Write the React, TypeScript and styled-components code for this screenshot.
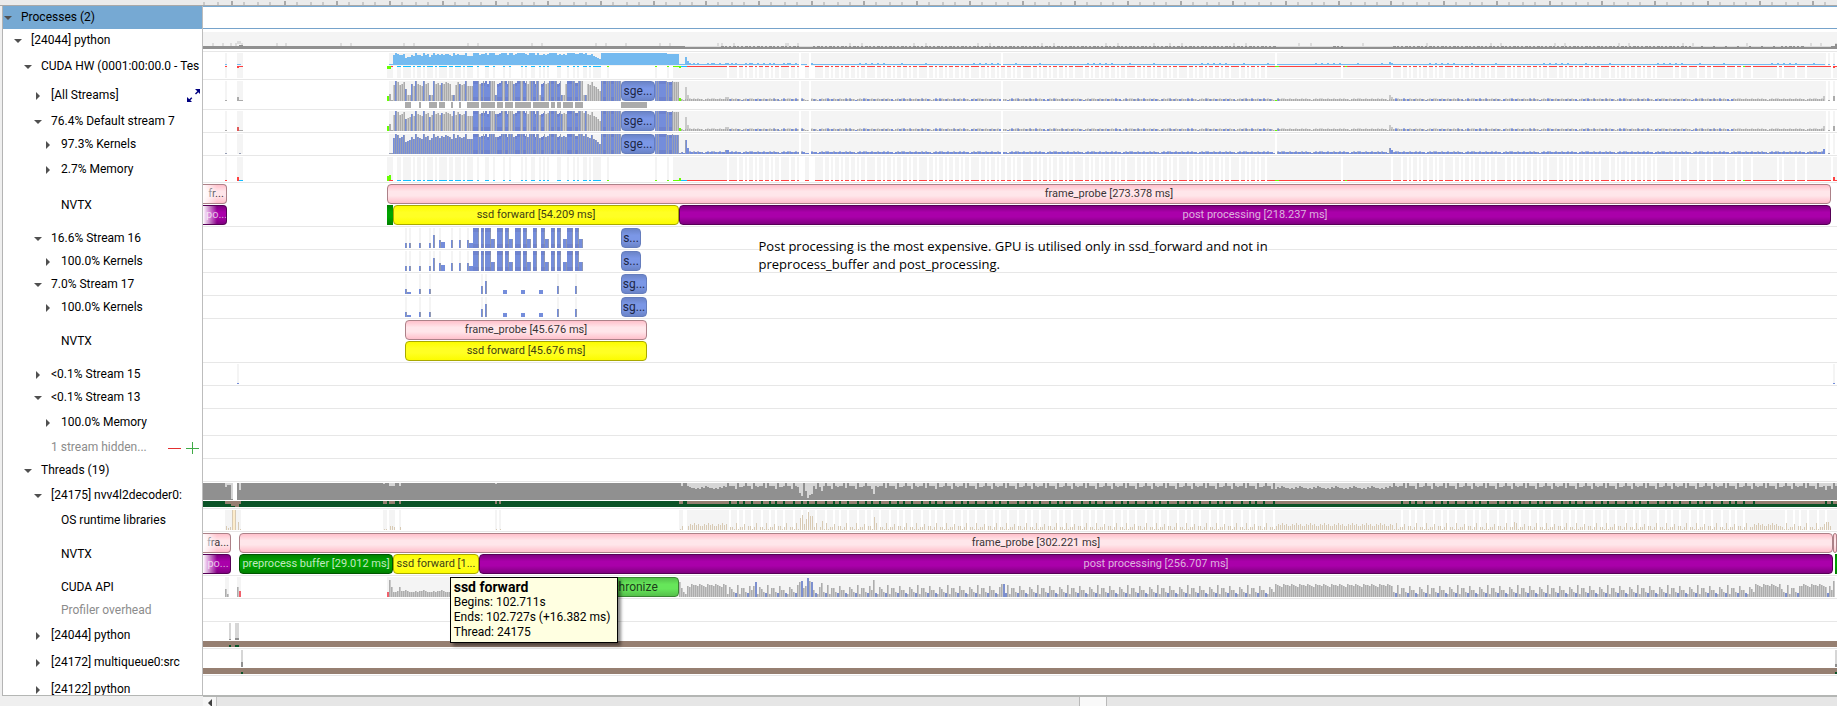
import React from 'react';
import styled, { createGlobalStyle, css } from 'styled-components';

const GlobalStyle = createGlobalStyle`
  *, *::before, *::after { box-sizing: border-box; }
  body { margin: 0; background: #efefef; font-family: Roboto, "Liberation Sans", sans-serif; font-size: 12px; color: #000; }
  button { font: inherit; color: inherit; padding: 0; border: 0; background: none; }
`;

/* ---------- page frame ---------- */

const Page = styled.div`
  height: 100vh;
  display: flex;
  flex-direction: column;
  overflow: hidden;
`;

const RulerBar = styled.header`
  display: flex;
  flex: none;
  height: 6px;
  padding-left: 203px;
  background: #ebebeb;
  border-bottom: 1px solid #a9a9a9;
`;

const Rows = styled.main`
  flex: 1;
  min-height: 0;
  overflow: hidden;
  margin-left: 2px;
  border-left: 1px solid #b4b4b4;
  border-bottom: 1px solid #b4b6b4;
  background: #fff;
`;

const Row = styled.div<{ $h: number }>`
  display: flex;
  height: ${p => p.$h}px;
`;

const Label = styled.div<{ $depth: number; $head?: boolean; $dim?: boolean; $even?: boolean }>`
  display: flex;
  align-items: center;
  flex: none;
  width: 200px;
  padding: 0 0 ${p => (p.$even ? 0 : 2)}px ${p => p.$depth * 10}px;
  border-right: 1px solid #bdbdbd;
  overflow: hidden;
  white-space: nowrap;
  line-height: 16px;
  background: ${p => (p.$head ? '#76a9d3' : '#fff')};
  color: ${p => (p.$dim ? '#8c8c8c' : '#000')};
`;

const Toggle = styled.button`
  display: flex;
  flex: none;
  align-items: center;
  justify-content: center;
  width: 10px;
  height: 16px;
  margin-right: 8px;
`;

const NoToggle = styled.span`
  flex: none;
  width: 18px;
`;

const Tools = styled.span`
  display: flex;
  gap: 4px;
  margin-left: auto;
  padding-right: 2px;
`;

const ToolButton = styled.button`
  display: flex;
  align-items: center;
`;

const Lane = styled.div<{ $head?: boolean }>`
  position: relative;
  flex: 1;
  min-width: 0;
  border-bottom: 1px solid #e7e7e7;
  ${p => p.$head && css`
    border-top: 1px solid #76a9d3;
    border-bottom-color: #76a3cb;
  `}
`;

const Svg = styled.svg`
  display: block;
  width: 100%;
`;

const Over = styled.div`
  position: absolute;
  inset: 0;
  display: flex;
  flex-direction: column;
  gap: 1px;
  padding-top: 1px;
`;

const Track = styled.div<{ $parts: number[] }>`
  display: grid;
  grid-template-columns: ${p => p.$parts.map(n => `minmax(0, ${n}fr)`).join(' ')};
  height: 20px;
`;

const Space = styled.span<{ $w?: number }>`
  flex: ${p => p.$w ?? 1} 1 0;
`;

type Tone = 'pink' | 'yellow' | 'purple' | 'green' | 'lime' | 'blue';
const tones: Record<Tone, [string, string, string, string]> = {
  pink: ['#ffc0cb', '#ffe6ea', '#ac8188', '#3b3336'],
  yellow: ['#fcfc00', '#ffff24', '#a9a900', '#3e3e10'],
  purple: ['#800080', '#aa00aa', '#560056', '#dcb4dc'],
  green: ['#008000', '#00a400', '#005600', '#c2e6c2'],
  lime: ['#55c04b', '#66e65a', '#3a8433', '#1d3d1a'],
  blue: ['#6b84c8', '#7b97e6', '#657dbd', '#1d2644'],
};

const Range = styled.div<{ $tone: Tone; $fade?: boolean; $slim?: boolean }>`
  position: relative;
  overflow: hidden;
  white-space: nowrap;
  text-align: center;
  font-size: ${p => (p.$tone === 'blue' || p.$tone === 'lime' ? 12 : 11)}px;
  line-height: 18px;
  border: 1px solid ${p => tones[p.$tone][2]};
  border-radius: 4px;
  color: ${p => tones[p.$tone][3]};
  background: linear-gradient(${p => `${tones[p.$tone][0]}, ${tones[p.$tone][1]} 35%, ${tones[p.$tone][1]} 60%, ${tones[p.$tone][0]}`});
  ${p => p.$slim && css`border-width: 0; border-radius: 0;`}
  ${p => p.$fade && css`
    border-left: 0;
    border-radius: 0 4px 4px 0;
    padding-left: 3px;
    &::before {
      content: '';
      position: absolute;
      inset: -1px auto -1px 0;
      width: 14px;
      background: linear-gradient(90deg, #fff, rgba(255, 255, 255, 0));
    }
  `}
`;

const Note = styled.p`
  position: absolute;
  z-index: 2;
  top: 10px;
  left: 34%;
  margin: 0;
  white-space: nowrap;
  font-family: "Open Sans", "Noto Sans", sans-serif;
  font-size: 13px;
  line-height: 18px;
`;

const Tip = styled.div`
  position: absolute;
  z-index: 3;
  top: 1px;
  left: 15.1%;
  min-width: 168px;
  padding: 2px 3px;
  border: 1px solid #000;
  background: #ffffe1;
  box-shadow: 3px 3px 3px rgba(0, 0, 0, 0.45);
  line-height: 15px;
  white-space: nowrap;
`;

const TipTitle = styled.div`
  font-size: 14px;
  font-weight: 700;
`;

const TipLine = styled.div``;

const ScrollBar = styled.footer`
  display: flex;
  flex: none;
  height: 10px;
  margin-left: 203px;
  border-top: 1px solid #b4b6b4;
  background: #e6e6e6;
`;

const ScrollButton = styled.button`
  display: flex;
  align-items: flex-start;
  justify-content: center;
  width: 14px;
  padding-top: 2px;
  background: #f6f6f6;
  border-right: 1px solid #c4c4c4;
`;

const Thumb = styled.button`
  flex: 26 1 0;
  background: #f9f9f9;
  border: solid #b9b9b9;
  border-width: 0 1px;
`;

/* ---------- chart drawing ---------- */

const START = 203;
const SPAN = 1634;
const BG = '#f4f4f4';
const BLUE = '#748ddb';
const SEP = '#979fb6';
const GREY = '#c9c9c9';
const GREY2 = '#ababab';
const SKY = '#74baf0';
const RED = '#ff4040';
const LIME = '#66ff00';
const CYAN = '#12bdff';

type Layer = [string, string];
const r = (x: number, y: number, w: number, h: number) => `M${x} ${y}h${w}v${h}h${-w}z`;
const rs = (list: number[][], y: number, h: number) => list.map(([a, b]) => r(a, y, b - a, h)).join('');

function Chart({ h, layers }: { h: number; layers: Layer[] }) {
  return (
    <Svg height={h} viewBox={`${START} 0 ${SPAN} ${h}`} preserveAspectRatio="none" shapeRendering="crispEdges" aria-hidden="true">
      {layers.map(([fill, d], i) => <path key={i} fill={fill} d={d} />)}
    </Svg>
  );
}

/* utilisation samples, two units apart, from 393 up to 679 */
const load = [
  16, 20, 19, 16, 17, 19, 12, 13, 14, 17, 15, 20, 17, 16, 15, 20, 17, 18, 14, 16, 20, 17, 18, 16, 18, 17, 19, 18, 17, 15,
  20, 16, 19, 17, 16, 17, 20, 15, 15, 15, 20, 20, 20, 17, 18, 18, 20, 17, 20, 20, 20, 17, 17, 18, 20, 20, 20, 17, 20, 20,
  17, 18, 20, 20, 20, 20, 18, 17, 20, 20, 20, 17, 20, 16, 17, 18, 17, 18, 20, 20, 20, 20, 17, 18, 17, 18, 17, 20, 20, 20,
  20, 18, 18, 20, 20, 18, 20, 17, 16, 19, 15, 14, 12, 10,
];
while (load.length < 137) load.push(20);
load.push(19, 19, 19, 19, 19, 19);

/* long kernels that are drawn as one block */
const solid = [
  [473, 479], [481, 484], [485, 491], [497, 503], [505, 509], [515, 521], [523, 527], [533, 537], [541, 545], [551, 555],
  [557, 561], [567, 573], [575, 579], [603, 607], [611, 615], [659, 667], [669, 673],
];
const steps = [
  [491, 495, 9], [509, 513, 9], [527, 531, 9], [545, 549, 9], [563, 567, 9], [579, 583, 9],
];
const inSolid = (x: number) => solid.some(([a, b]) => x >= a && x < b);

const topGaps = [[799, 801], [809, 811], [1001, 1003], [1275, 1277]];
const laneBg = (y: number, h: number, wide = false) => {
  let d = r(389, y, 288, h) + r(225, y, 2, h) + r(237, y, 6, h);
  let from = 677;
  topGaps.filter(g => !wide || g[0] !== 1275).forEach(([a, b]) => { d += r(from, y, a - from, h); from = b; });
  return d + r(from, y, 1826 - from, h) + r(1828, y, 2, h) + r(1833, y, 2, h);
};

const tailShape = [2, 3, 2, 2, 3, 2, 3, 2, 2, 1, 2, 3, 2, 3, 3, 2, 2, 3, 2];
const tailHeight = (x: number) => {
  if (x < 685) return x % 4 === 1 ? 2 : 1;
  if (x === 685) return 14;
  if (x === 687) return 6;
  if (x === 689) return 3;
  if (x === 725 || x === 727) return 4;
  if (x === 1389) return 6;
  if (x === 1391) return 4;
  if (x === 1823) return 5;
  if (x > 801 && x < 809) return x < 805 ? 2 : 1;
  return tailShape[((x - 685) / 2) % tailShape.length];
};

const kernels = (bottom: number, mode: 'blue' | 'mixed', cut = false): Layer[] => {
  let blue = '', sep = '', grey = '', grey2 = '', pale = '', shade = '';
  load.forEach((v, i) => {
    const x = 393 + i * 2;
    if (x >= 621 && x < 655) return;
    let h = v;
    const block = inSolid(x);
    const dense = x >= 601;
    const isBlue = mode === 'blue' || block || (x < 473 && [1, 6, 9, 11, 15, 18, 20, 24, 30, 33, 36].includes(i)) || (dense && x < 673) || (x > 473 && x < 590 && i % 3 === 0);
    if (cut && !block && x > 400 && x < 590 && (i % 11 === 7 || i % 11 === 8)) h = 6;
    if (isBlue) {
      blue += r(x, bottom - h, 2, h);
      if (!block) sep += r(x + 1, bottom - h, 1, h);
      else shade += r(x, bottom - h, 2, 3) + r(x, bottom - 4, 2, 4);
    } else {
      grey += r(x, bottom - h, 2, h);
      grey2 += r(x + 1, bottom - h, 1, h);
    }
  });
  solid.forEach(([, b]) => { sep += r(b - 1, bottom - 20, 1, 20); });
  for (let x = 679; x < 1825; x += 2) {
    if (topGaps.some(([a]) => x === a)) continue;
    const h = tailHeight(x);
    const k = (x - 679) / 2;
    const quiet = (x < 725) || (x > 1277 && x < 1391) || x > 1735;
    const b = mode === 'blue' || (!quiet && [2, 4, 7].includes(k % 9));
    if (b) { blue += r(x, bottom - h, 2, h); if (k % 2) sep += r(x, bottom - h, 1, h); }
    else { grey += r(x, bottom - h, 2, h); grey2 += r(x, bottom - Math.min(h, 2), 1, Math.min(h, 2)); }
    if (h === 3) pale += r(x, bottom - 3, 2, 1);
  }
  const small = r(389, bottom - 1, 4, 1) + r(225, bottom - 1, 2, 1) + r(239, bottom - 1, 2, 1) + r(1828, bottom - 1, 2, 1);
  const out: Layer[] = [[BLUE, blue], ['rgba(90,105,170,.25)', shade], [SEP, sep], [GREY, grey], [GREY2, grey2], ['rgba(244,244,244,.4)', pale], [mode === 'blue' ? SEP : GREY2, small]];
  if (mode === 'mixed') {
    out.push([LIME, r(387, bottom - 5, 2, 5) + r(679, bottom - 3, 2, 3) + r(1275, bottom - 1, 2, 1)]);
    out.push([GREY2, r(389, bottom - 7, 2, 7) + r(239, bottom - 1, 4, 1) + r(1833, bottom - 5, 2, 5)]);
    out.push([cut ? GREY2 : '#e05a5a', r(237, bottom - 4, 2, 4)]);
  }
  return out;
};

/* memory transfer bursts */
const bursts: number[][] = [
  [387, 393], [397, 401], [403, 411], [413, 415], [417, 421], [423, 425], [427, 433], [435, 437], [439, 447], [449, 453], [455, 461], [463, 465], [467, 473],
  [477, 479], [485, 489], [493, 495], [503, 505], [509, 511], [521, 523], [525, 527], [531, 535], [539, 541], [543, 545], [547, 549], [557, 561], [567, 569],
  [573, 575], [577, 579], [583, 587], [589, 591], [593, 601], [607, 609], [655, 657], [667, 669],
];
const tailBursts: number[][] = [[673, 727]];
{
  const cycle = [[2, 8], [2, 4], [2, 2], [2, 4], [2, 2], [2, 4], [2, 4], [2, 2], [2, 4]];
  const fill = (from: number, to: number) => {
    let x = from, i = 0;
    while (x < to) {
      const [g, w] = cycle[i++ % cycle.length];
      x += g;
      if (x < to) tailBursts.push([x, Math.min(to, x + w)]);
      x += w;
    }
  };
  fill(727, 799);
  tailBursts.push([805, 809]);
  fill(813, 1269);
  tailBursts.push([1269, 1341], [1343, 1391]);
  fill(1391, 1655);
  tailBursts.push([1657, 1673], [1675, 1679], [1681, 1687], [1689, 1697], [1699, 1705], [1707, 1711], [1713, 1725], [1727, 1735], [1737, 1741], [1743, 1751], [1753, 1777], [1779, 1782], [1784, 1795], [1797, 1805], [1807, 1831], [1833, 1837]);
}

const hwChart: Layer[] = (() => {
  let sky = '';
  load.forEach((v, i) => { const h = Math.round(v * 0.6); sky += r(393 + 2 * i, 13 - h, 2, h); });
  for (let x = 679; x < 1825; x += 2) {
    if (topGaps.some(([a]) => x === a) || x === 807) continue;
    const t = tailHeight(x);
    const h = x === 1389 ? 3 : t > 5 ? Math.round(t * 0.6) : t === 4 ? 2 : (t === 3 && (x % 6 === 1 || x < 800)) ? 2 : 1;
    sky += r(x, 13 - h, 2, h);
  }
  sky += r(389, 12, 4, 1) + r(225, 12, 2, 1) + r(237, 12, 4, 1) + r(1828, 12, 2, 1) + r(1833, 12, 2, 1);
  return [
    [BG, laneBg(1, 13) + rs(bursts, 15, 11) + rs(tailBursts, 15, 11) + r(225, 14, 2, 12) + r(237, 14, 6, 12)],
    [SKY, sky],
    [CYAN, rs(bursts.slice(1, -3), 14, 1) + r(241, 14, 2, 1) + r(681, 14, 6, 1)],
    [RED, rs(tailBursts.slice(1), 14, 1) + r(687, 14, 40, 1) + r(389, 14, 4, 1) + r(225, 14, 2, 1) + r(237, 14, 2, 2) + r(239, 14, 4, 1) + r(1833, 14, 2, 2)],
    [LIME, r(387, 14, 4, 3) + rs(bursts.slice(-3), 14, 1) + r(673, 14, 6, 1) + r(679, 14, 2, 2) + r(1275, 14, 4, 1) + r(1345, 14, 2, 1) + r(1743, 14, 2, 1)],
  ];
})();

const memoryChart: Layer[] = [
  [BG, rs(bursts, 1, 24) + rs(tailBursts, 1, 24) + r(225, 1, 2, 24) + r(237, 1, 6, 24)],
  [CYAN, rs(bursts.slice(1, -3), 24, 1) + r(239, 24, 4, 1) + r(681, 24, 6, 1)],
  [RED, rs(tailBursts.slice(1), 24, 1) + r(687, 24, 40, 1) + r(389, 24, 4, 1) + r(225, 24, 2, 1) + r(237, 21, 2, 4) + r(1833, 21, 2, 4)],
  [LIME, r(387, 20, 2, 5) + r(389, 19, 2, 5) + rs(bursts.slice(-3), 24, 1) + r(673, 24, 6, 1) + r(679, 22, 2, 3) + r(1275, 24, 4, 1) + r(1345, 24, 2, 1) + r(1743, 24, 2, 1)],
];

const overflowBlocks = [[405, 411], [419, 421], [429, 437], [439, 445], [451, 453], [459, 461], [467, 479], [481, 495], [497, 503], [505, 513], [515, 531], [533, 549], [551, 555], [557, 561], [563, 573], [575, 583], [621, 647]];

const cpuPairs = [
  212, 222, 230, 235, 241, 276, 285, 340, 350, 403, 413, 467, 477, 531, 541, 595, 605, 625, 659, 669, 717, 721, 733, 785, 787, 797, 849,
  861, 913, 925, 977, 989, 1041, 1053, 1105, 1117, 1153, 1169, 1181, 1233, 1245, 1298, 1310, 1362, 1426, 1490, 1500, 1554, 1564, 1618,
  1628, 1682, 1692, 1746, 1810, 1820, 1835,
];
const cpuChart: Layer[] = (() => {
  let dark = r(203, 18, 1634, 2) + r(203, 17, 482, 1), light = r(685, 17, 1152, 1) + r(237, 12, 4, 3);
  for (let x = 721; x < 1805; x += 4) {
    if ((x > 797 && x < 813) || (x > 1275 && x < 1330) || (x > 1343 && x < 1391) || (x > 1685 && x < 1780 && x % 3)) continue;
    dark += r(x, 17, (x % 12 === 1 ? 3 : 2), 1);
  }
  dark += r(239, 16, 4, 1) + r(1831, 17, 6, 1) + r(1835, 15, 2, 3);
  return [[BG, r(203, 3, 1634, 14)], ['#dcdcdc', cpuPairs.map(x => r(x, 14, 2, 4)).join('') + light], ['#909090', dark]];
})();

const stream16: Layer[] = (() => {
  const pins = [[405, 5], [409, 5], [419, 5], [429, 5], [433, 13], [439, 8], [451, 8], [459, 8], [467, 8]];
  const low = [[441, 445, 6], [469, 473, 5]];
  const full = [[473, 479], [481, 484], [485, 491], [497, 503], [505, 509], [515, 521], [523, 527], [533, 537], [541, 545], [551, 555], [557, 561], [567, 573], [575, 579]];
  return [
    [BG, pins.map(([x]) => r(x, 1, 2, 20)).join('')],
    [BLUE, full.map(([a, b]) => r(a, 1, b - a, 20)).join('') + [...steps, ...low].map(([a, b, h]) => r(a, 21 - h, b - a, h)).join('') + pins.map(([x, h]) => r(x, 21 - h, 2, h)).join('')],
    ['rgba(150,155,170,.8)', full.map(([, b]) => r(b - 1, 1, 1, 20)).join('') + steps.map(([, b, h]) => r(b - 1, 21 - h, 1, h)).join('') + pins.map(([x, h]) => r(x + 1, 21 - h, 1, h)).join('')],
    ['rgba(90,105,170,.25)', full.map(([a, b]) => r(a, 1, b - a, 4) + r(a, 17, b - a, 4)).join('')],
  ];
})();

const stream17: Layer[] = (() => {
  const pins = [[405, 5], [419, 5], [429, 5], [481, 8], [485, 13], [557, 8], [575, 8]];
  const low = [[407, 411, 2], [503, 507, 4], [521, 525, 4], [539, 543, 4]];
  return [
    [BG, pins.map(([x]) => r(x, 1, 2, 20)).join('')],
    [BLUE, [...low.map(([a, b, h]) => r(a, 21 - h, b - a, h)), ...pins.map(([x, h]) => r(x, 21 - h, 2, h))].join('')],
    ['rgba(150,155,170,.8)', pins.map(([x, h]) => r(x + 1, 21 - h, 1, h)).join('')],
  ];
})();

const calm = (x: number) => (x >= 687 && x < 727) || (x >= 1275 && x < 1393);

const decoderChart: Layer[] = (() => {
  let light = r(225, 1, 2, 4) + r(227, 1, 4, 2) + r(231, 1, 2, 16) + r(239, 1, 2, 7) + r(383, 1, 2, 1) + r(389, 1, 6, 3) + r(399, 1, 2, 3) + r(495, 1, 2, 1) + r(681, 1, 2, 3);
  let brown = r(225, 19, 16, 3) + r(231, 22, 8, 2) + r(235, 24, 4, 1) + r(383, 19, 4, 3) + r(389, 19, 6, 3) + r(399, 19, 2, 3) + r(495, 19, 2, 3) + r(499, 19, 2, 3) + r(679, 19, 4, 3) + r(687, 19, 40, 3);
  const notch = [0, 3, 3, 3, 6, 0, 4, 4, 3, 0, 3, 3, 6, 0, 3, 4, 3, 3, 0, 5];
  const deep: Record<number, number> = { 799: 10, 801: 13, 805: 8, 807: 15, 809: 12, 811: 11, 821: 8, 873: 11, 1825: 7 };
  for (let x = 687; x < 1837; x += 2) {
    const k = (x - 687) / 2;
    const h = deep[x] ?? (calm(x) ? [3, 4, 5, 5, 6, 5, 6, 4, 5][k % 9] : notch[k % 20]);
    if (h) light += r(x, 1, 2, h);
    const isCalm = calm(x) || (x > 1753 && x < 1825);
    if (x >= 727 && (isCalm || ![0, 5, 9, 12].includes(k % 16))) brown += r(x, 19, 2, 3);
  }
  return [
    ['#909090', r(203, 1, 1634, 17)], ['#d6d6d6', light], ['#fff', r(233, 1, 4, 17)],
    ['#0b5327', r(203, 19, 1634, 6)], ['#967f71', brown],
  ];
})();

const osChart: Layer[] = (() => {
  const bg = r(225, 1, 16, 20) + r(383, 1, 4, 20) + r(389, 1, 6, 20) + r(399, 1, 2, 20) + r(495, 1, 2, 20) + r(499, 1, 2, 20) + r(679, 1, 4, 20) + r(687, 1, 1150, 20);
  let gaps = '', tan = '';
  [[226, 4], [228, 2], [230, 3], [232, 20], [235, 20], [238, 8], [240, 1], [384, 1], [386, 1], [390, 4], [392, 4], [394, 3], [400, 3], [496, 1], [500, 1], [680, 1], [682, 4]].forEach(([x, h]) => { tan += r(x, 21 - h, 1, h); });
  const lows = [4, 4, 1, 3, 7, 0, 3, 3, 1, 7, 1, 3, 3, 6, 0];
  const deep: Record<number, number> = { 800: 12, 802: 15, 806: 11, 808: 18, 810: 14, 812: 14, 822: 9, 874: 13, 1514: 8, 1828: 8, 1826: 8 };
  for (let x = 688; x < 1832; x += 2) {
    const k = (x - 688) / 2;
    const isCalm = calm(x) || (x > 1753 && x < 1782);
    const h = deep[x] ?? (isCalm ? [4, 6, 5, 7, 5, 6, 4][k % 7] : lows[k % 15]);
    if (h) tan += r(x, 21 - h, 1, h);
    if (!isCalm && x > 727 && [0, 5, 9, 12].includes(k % 16)) gaps += r(x - 1, 1, 2, 20);
  }
  return [[BG, bg], ['#fff', gaps], ['#fdeccb', r(233, 1, 2, 20)], ['#d8cab4', tan]];
})();

const apiChart: Layer[] = (() => {
  let grey = '', grey2 = '', blue = '';
  const put = (x: number, h: number) => { grey += r(x, 21 - h, 2, h); grey2 += r(x, 21 - h, 1, h); };
  put(225, 8); put(227, 3); put(237, 10); put(239, 6); put(389, 17); put(391, 10);
  for (let x = 393; x < 452; x += 2) put(x, x === 399 ? 10 : [5, 5, 6, 5, 6, 6, 7, 6, 5][((x - 393) / 2) % 9]);
  const pattern = [3, 9, 9, 5, 4, 11, 7, 7, 4, 3, 10, 8, 5, 4, 12];
  const deep: Record<number, number> = { 679: 15, 681: 9, 683: 5, 685: 3, 753: 11, 755: 15, 799: 15, 801: 16, 805: 11, 807: 19, 809: 16, 811: 15, 821: 14, 873: 17, 1001: 13, 1003: 13, 1833: 16 };
  for (let x = 679; x < 1835; x += 2) {
    const k = (x - 679) / 2;
    const busy = calm(x) || (x > 1753 && x < 1780) || (x > 1800 && x < 1826);
    const h = deep[x] ?? (busy ? [12, 11, 13, 12, 11, 10, 13, 12][k % 8] : pattern[k % 15]);
    if (!busy && (([4, 8, 13].includes(k % 15) && x > 725) || [755, 801, 807, 811, 1003].includes(x))) blue += r(x, 21 - h, 2, h);
    else put(x, h);
  }
  return [
    [BG, r(225, 1, 4, 20) + r(237, 1, 4, 20) + r(387, 1, 1448, 20)],
    [GREY, grey], ['#adadad', grey2], ['#7d90cf', blue],
    ['#f0606c', r(239, 15, 2, 6) + r(387, 16, 2, 5)],
  ];
})();

const thread1: Layer[] = [
  ['#d6d6d6', r(229, 1, 2, 17) + r(235, 1, 4, 17)],
  ['#909090', r(229, 17, 2, 1) + r(235, 16, 4, 2)],
  ['#967f71', r(203, 19, 1634, 6)],
  ['#0b5327', r(229, 23, 2, 2) + r(235, 23, 4, 2)],
];
const thread2: Layer[] = [
  ['#d6d6d6', r(241, 1, 2, 17) + r(1835, 1, 2, 17)],
  ['#909090', r(241, 13, 2, 5) + r(1835, 15, 2, 3)],
  ['#967f71', r(203, 19, 1634, 6)],
  ['#0b5327', r(241, 23, 2, 2) + r(1835, 23, 2, 2)],
];

const majors = Array.from({ length: 31 }, (_, i) => 231 + Math.round(i * 52.7));
const rulerChart: Layer[] = [
  ['#c9c9c9', majors.map(m => [13, 27, 39].map(o => r(m + o - 1, 2, 2, 3)).join('')).join('') + r(203, 2, 2, 3) + r(217, 2, 2, 3)],
  ['#a9a9a9', majors.map(m => r(m, 1, 2, 4)).join('')],
];

/* ---------- small icons ---------- */

const Caret = ({ open }: { open: boolean }) => (
  <svg width="10" height="10" viewBox="0 0 10 10" aria-hidden="true">
    <path fill="#505050" d={open ? 'M1 4h8L5 8z' : 'M3 2v8l4-4z'} />
  </svg>
);

const ExpandIcon = () => (
  <svg width="14" height="14" viewBox="0 0 14 14" aria-hidden="true">
    <path fill="#000080" d="M9 1h5v5l-1.700-1.700-2.300 2.300-1-1 2.300-2.300zM1 14h5l-1.700-1.700 2-2-1-1-2 2L1 9z" />
  </svg>
);

const MinusIcon = () => (
  <svg width="14" height="14" viewBox="0 0 14 14" shapeRendering="crispEdges" aria-hidden="true"><path fill="#e33030" d="M0 8h13v1H0z" /></svg>
);
const PlusIcon = () => (
  <svg width="14" height="14" viewBox="0 0 14 14" shapeRendering="crispEdges" aria-hidden="true"><path fill="#3faa46" d="M0 8h13v1H0zM6 2h1v12H6z" /></svg>
);

/* ---------- rows ---------- */

type Seg = { w: number; tone?: Tone; text?: string; fade?: boolean; slim?: boolean };
function Segments({ items }: { items: Seg[] }) {
  return (
    <Track $parts={items.map(s => s.w)}>
      {items.map((s, i) => s.tone
        ? <Range key={i} $tone={s.tone} $fade={s.fade} $slim={s.slim}>{s.text}</Range>
        : <Space key={i} />)}
    </Track>
  );
}

type RowProps = {
  h: number; depth: number; text: string; open?: boolean; head?: boolean; dim?: boolean;
  tools?: React.ReactNode; chart?: Layer[]; tracks?: Seg[][]; extra?: React.ReactNode;
};

const TimelineRow = ({ h, depth, text, open, head, dim, tools, chart, tracks, extra }: RowProps) => (
  <Row $h={h}>
    <Label $depth={depth} $head={head} $dim={dim} $even={h % 2 === 0}>
      {open === undefined ? <NoToggle /> : (
        <Toggle type="button" aria-expanded={open} aria-label={`Toggle ${text}`}><Caret open={open} /></Toggle>
      )}
      {text}
      {tools && <Tools>{tools}</Tools>}
    </Label>
    <Lane $head={head}>
      {chart && <Chart h={h - 1} layers={chart} />}
      {tracks && <Over>{tracks.map((t, i) => <Segments key={i} items={t} />)}</Over>}
      {extra}
    </Lane>
  </Row>
);

const sge = (w: number, text: string): Seg[][] => [[{ w: 418 }, { w, tone: 'blue', text }, { w: 1216 - w }]];

export default function App() {
  return (
    <>
      <GlobalStyle />
      <Page>
        <RulerBar><Chart h={5} layers={rulerChart} /></RulerBar>
        <Rows>
          <TimelineRow h={23} depth={0} text="Processes (2)" open head />
          <TimelineRow h={23} depth={1} text="[24044] python" open chart={cpuChart} />
          <TimelineRow h={28} depth={2} text="CUDA HW (0001:00:00.0 - Tes" open chart={hwChart} />
          <TimelineRow
            h={30} depth={3} text="[All Streams]" open={false}
            tools={<ToolButton type="button" aria-label="Expand all streams"><ExpandIcon /></ToolButton>}
            chart={[[BG, laneBg(1, 20, true)], ...kernels(21, 'mixed', true), ['#ababab', rs(overflowBlocks, 22, 6)]]}
            tracks={sge(34, 'sge...')}
          />
          <TimelineRow h={23} depth={3} text="76.4% Default stream 7" open chart={[[BG, laneBg(1, 20, true)], ...kernels(21, 'mixed')]} tracks={sge(34, 'sge...')} />
          <TimelineRow h={23} depth={4} text="97.3% Kernels" open={false} chart={[[BG, laneBg(1, 20)], ...kernels(21, 'blue')]} tracks={sge(34, 'sge...')} />
          <TimelineRow h={27} depth={4} text="2.7% Memory" open={false} chart={memoryChart} />
          <TimelineRow
            h={44} depth={4} text="NVTX"
            tracks={[
              [{ w: 24, tone: 'pink', text: 'fr...', fade: true }, { w: 160 }, { w: 1444, tone: 'pink', text: 'frame_probe [273.378 ms]' }, { w: 6 }],
              [{ w: 24, tone: 'purple', text: 'po...', fade: true }, { w: 160 }, { w: 6, tone: 'green', slim: true }, { w: 286, tone: 'yellow', text: 'ssd forward [54.209 ms]' }, { w: 1152, tone: 'purple', text: 'post processing [218.237 ms]' }, { w: 6 }],
            ]}
          />
          <TimelineRow
            h={23} depth={3} text="16.6% Stream 16" open chart={stream16} tracks={sge(20, 's...')}
            extra={<Note>Post processing is the most expensive. GPU is utilised only in ssd_forward and not in<br />preprocess_buffer and post_processing.</Note>}
          />
          <TimelineRow h={23} depth={4} text="100.0% Kernels" open={false} chart={stream16} tracks={sge(20, 's...')} />
          <TimelineRow h={23} depth={3} text="7.0% Stream 17" open chart={stream17} tracks={sge(26, 'sg...')} />
          <TimelineRow h={23} depth={4} text="100.0% Kernels" open={false} chart={stream17} tracks={sge(26, 'sg...')} />
          <TimelineRow
            h={44} depth={4} text="NVTX"
            tracks={[
              [{ w: 202 }, { w: 242, tone: 'pink', text: 'frame_probe [45.676 ms]' }, { w: 1190 }],
              [{ w: 202 }, { w: 242, tone: 'yellow', text: 'ssd forward [45.676 ms]' }, { w: 1190 }],
            ]}
          />
          <TimelineRow h={23} depth={3} text="<0.1% Stream 15" open={false} chart={[[BG, r(237, 1, 2, 20) + r(1833, 1, 2, 20)], [BLUE, r(237, 20, 2, 1) + r(1833, 20, 2, 1)]]} />
          <TimelineRow h={23} depth={3} text="<0.1% Stream 13" open />
          <TimelineRow h={27} depth={4} text="100.0% Memory" open={false} />
          <TimelineRow
            h={23} depth={3} text="1 stream hidden..." dim
            tools={<><ToolButton type="button" aria-label="Show fewer"><MinusIcon /></ToolButton><ToolButton type="button" aria-label="Show more"><PlusIcon /></ToolButton></>}
          />
          <TimelineRow h={23} depth={2} text="Threads (19)" open />
          <TimelineRow h={27} depth={3} text="[24175] nvv4l2decoder0:" open chart={decoderChart} />
          <TimelineRow h={23} depth={4} text="OS runtime libraries" chart={osChart} />
          <TimelineRow
            h={44} depth={4} text="NVTX"
            tracks={[
              [{ w: 28, tone: 'pink', text: 'fra...', fade: true }, { w: 8 }, { w: 1594, tone: 'pink', text: 'frame_probe [302.221 ms]' }, { w: 4, tone: 'pink' }],
              [{ w: 28, tone: 'purple', text: 'po...', fade: true }, { w: 8 }, { w: 154, tone: 'green', text: 'preprocess buffer [29.012 ms]' }, { w: 86, tone: 'yellow', text: 'ssd forward [1...' }, { w: 1354, tone: 'purple', text: 'post processing [256.707 ms]' }, { w: 2 }, { w: 2, tone: 'green', slim: true }],
            ]}
          />
          <TimelineRow
            h={23} depth={4} text="CUDA API" chart={apiChart}
            tracks={[[{ w: 304 }, { w: 172, tone: 'lime', text: 'cudaStreamSynchronize' }, { w: 1158 }]]}
            extra={
              <Tip role="tooltip">
                <TipTitle>ssd forward</TipTitle>
                <TipLine>Begins: 102.711s</TipLine>
                <TipLine>Ends: 102.727s (+16.382 ms)</TipLine>
                <TipLine>Thread: 24175</TipLine>
              </Tip>
            }
          />
          <TimelineRow h={23} depth={4} text="Profiler overhead" dim />
          <TimelineRow h={27} depth={3} text="[24044] python" open={false} chart={thread1} />
          <TimelineRow h={27} depth={3} text="[24172] multiqueue0:src" open={false} chart={thread2} />
          <TimelineRow h={27} depth={3} text="[24122] python" open={false} />
        </Rows>
        <ScrollBar>
          <ScrollButton type="button" aria-label="Scroll left">
            <svg width="6" height="8" viewBox="0 0 6 8" aria-hidden="true"><path fill="#404040" d="M5 0v8L1 4z" /></svg>
          </ScrollButton>
          <Space $w={862} />
          <Thumb type="button" aria-label="Timeline position" />
          <Space $w={730} />
        </ScrollBar>
      </Page>
    </>
  );
}
